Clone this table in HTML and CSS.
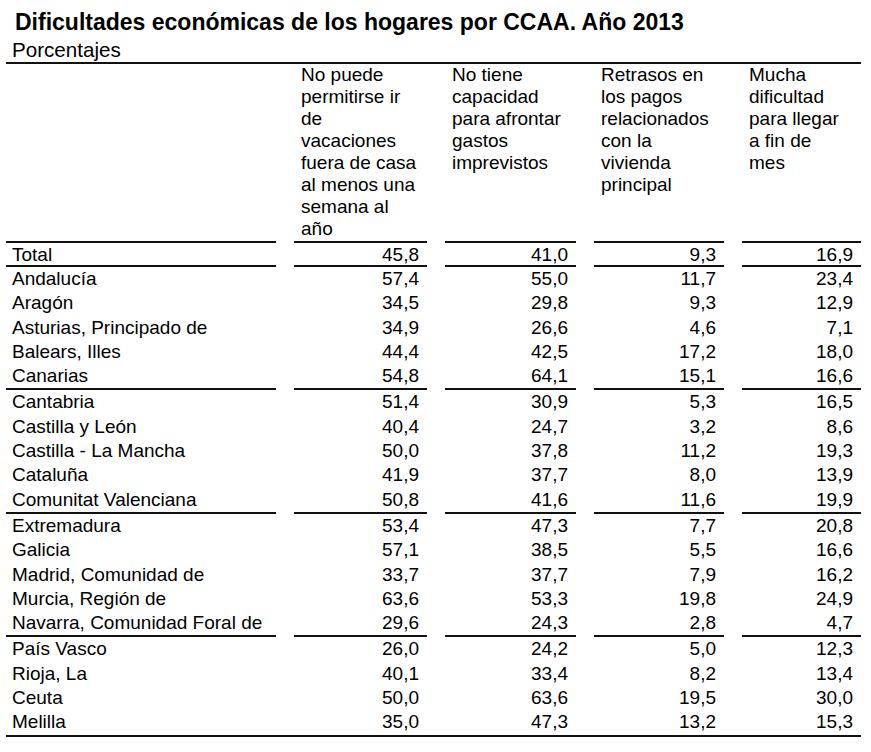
FILE: index.html
```html
<!DOCTYPE html>
<html lang="es">
<head>
<meta charset="utf-8">
<title>Dificultades económicas de los hogares por CCAA. Año 2013</title>
<link rel="stylesheet" href="styles.css">
</head>
<body>
<div class="page">
  <h1 class="title">Dificultades económicas de los hogares por CCAA. Año 2013</h1>
  <div class="subtitle">Porcentajes</div>
  <div class="table">
    <div class="row head">
      <div class="cell"></div>
      <div class="cell hd">No puede<br>permitirse ir<br>de<br>vacaciones<br>fuera de casa<br>al menos una<br>semana al<br>año</div>
      <div class="cell hd">No tiene<br>capacidad<br>para afrontar<br>gastos<br>imprevistos</div>
      <div class="cell hd">Retrasos en<br>los pagos<br>relacionados<br>con la<br>vivienda<br>principal</div>
      <div class="cell hd">Mucha<br>dificultad<br>para llegar<br>a fin de<br>mes</div>
    </div>
    <div class="row sep total">
      <div class="cell name">Total</div><div class="cell num">45,8</div><div class="cell num">41,0</div><div class="cell num">9,3</div><div class="cell num">16,9</div>
    </div>
    <div class="row"><div class="cell name">Andalucía</div><div class="cell num">57,4</div><div class="cell num">55,0</div><div class="cell num">11,7</div><div class="cell num">23,4</div></div>
    <div class="row"><div class="cell name">Aragón</div><div class="cell num">34,5</div><div class="cell num">29,8</div><div class="cell num">9,3</div><div class="cell num">12,9</div></div>
    <div class="row"><div class="cell name">Asturias, Principado de</div><div class="cell num">34,9</div><div class="cell num">26,6</div><div class="cell num">4,6</div><div class="cell num">7,1</div></div>
    <div class="row"><div class="cell name">Balears, Illes</div><div class="cell num">44,4</div><div class="cell num">42,5</div><div class="cell num">17,2</div><div class="cell num">18,0</div></div>
    <div class="row sep"><div class="cell name">Canarias</div><div class="cell num">54,8</div><div class="cell num">64,1</div><div class="cell num">15,1</div><div class="cell num">16,6</div></div>
    <div class="row"><div class="cell name">Cantabria</div><div class="cell num">51,4</div><div class="cell num">30,9</div><div class="cell num">5,3</div><div class="cell num">16,5</div></div>
    <div class="row"><div class="cell name">Castilla y León</div><div class="cell num">40,4</div><div class="cell num">24,7</div><div class="cell num">3,2</div><div class="cell num">8,6</div></div>
    <div class="row"><div class="cell name">Castilla - La Mancha</div><div class="cell num">50,0</div><div class="cell num">37,8</div><div class="cell num">11,2</div><div class="cell num">19,3</div></div>
    <div class="row"><div class="cell name">Cataluña</div><div class="cell num">41,9</div><div class="cell num">37,7</div><div class="cell num">8,0</div><div class="cell num">13,9</div></div>
    <div class="row sep"><div class="cell name">Comunitat Valenciana</div><div class="cell num">50,8</div><div class="cell num">41,6</div><div class="cell num">11,6</div><div class="cell num">19,9</div></div>
    <div class="row"><div class="cell name">Extremadura</div><div class="cell num">53,4</div><div class="cell num">47,3</div><div class="cell num">7,7</div><div class="cell num">20,8</div></div>
    <div class="row"><div class="cell name">Galicia</div><div class="cell num">57,1</div><div class="cell num">38,5</div><div class="cell num">5,5</div><div class="cell num">16,6</div></div>
    <div class="row"><div class="cell name">Madrid, Comunidad de</div><div class="cell num">33,7</div><div class="cell num">37,7</div><div class="cell num">7,9</div><div class="cell num">16,2</div></div>
    <div class="row"><div class="cell name">Murcia, Región de</div><div class="cell num">63,6</div><div class="cell num">53,3</div><div class="cell num">19,8</div><div class="cell num">24,9</div></div>
    <div class="row sep"><div class="cell name">Navarra, Comunidad Foral de</div><div class="cell num">29,6</div><div class="cell num">24,3</div><div class="cell num">2,8</div><div class="cell num">4,7</div></div>
    <div class="row"><div class="cell name">País Vasco</div><div class="cell num">26,0</div><div class="cell num">24,2</div><div class="cell num">5,0</div><div class="cell num">12,3</div></div>
    <div class="row"><div class="cell name">Rioja, La</div><div class="cell num">40,1</div><div class="cell num">33,4</div><div class="cell num">8,2</div><div class="cell num">13,4</div></div>
    <div class="row"><div class="cell name">Ceuta</div><div class="cell num">50,0</div><div class="cell num">63,6</div><div class="cell num">19,5</div><div class="cell num">30,0</div></div>
    <div class="row"><div class="cell name">Melilla</div><div class="cell num">35,0</div><div class="cell num">47,3</div><div class="cell num">13,2</div><div class="cell num">15,3</div></div>
  </div>
</div>
</body>
</html>
```

FILE: styles.css
```css
* { box-sizing: border-box; }

body {
  margin: 0;
  background: #ffffff;
  color: #000000;
  font-family: "Liberation Sans", Arial, Helvetica, sans-serif;
}

.page {
  padding: 8px 10px 0 6px;
  width: 871px;
}

.title {
  margin: 0 0 0 9px;
  font-size: 23px;
  line-height: 28px;
  font-weight: 700;
}

.subtitle {
  margin: 2px 0 0 6px;
  font-size: 20.6px;
  line-height: 24px;
}

.table {
  width: 855px;
  border-top: 2px solid #111111;
  border-bottom: 2px solid #111111;
}

.row {
  display: grid;
  grid-template-columns: 270px 133px 131px 130px 119px;
  column-gap: 18px;
  font-size: 19px;
  line-height: 24.3px;
}

.row.head {
  line-height: 22px;
}

.row.head .cell {
  padding-bottom: 1px;
  border-bottom: 2px solid #111111;
  white-space: nowrap;
}

.cell.hd {
  padding-left: 7px;
}

.cell.name {
  padding-left: 6px;
  white-space: nowrap;
}

.cell.num {
  text-align: right;
  padding-right: 8px;
}

.row.sep .cell {
  border-bottom: 2px solid #111111;
}

.row.total .cell {
  height: 24px;
}
```
